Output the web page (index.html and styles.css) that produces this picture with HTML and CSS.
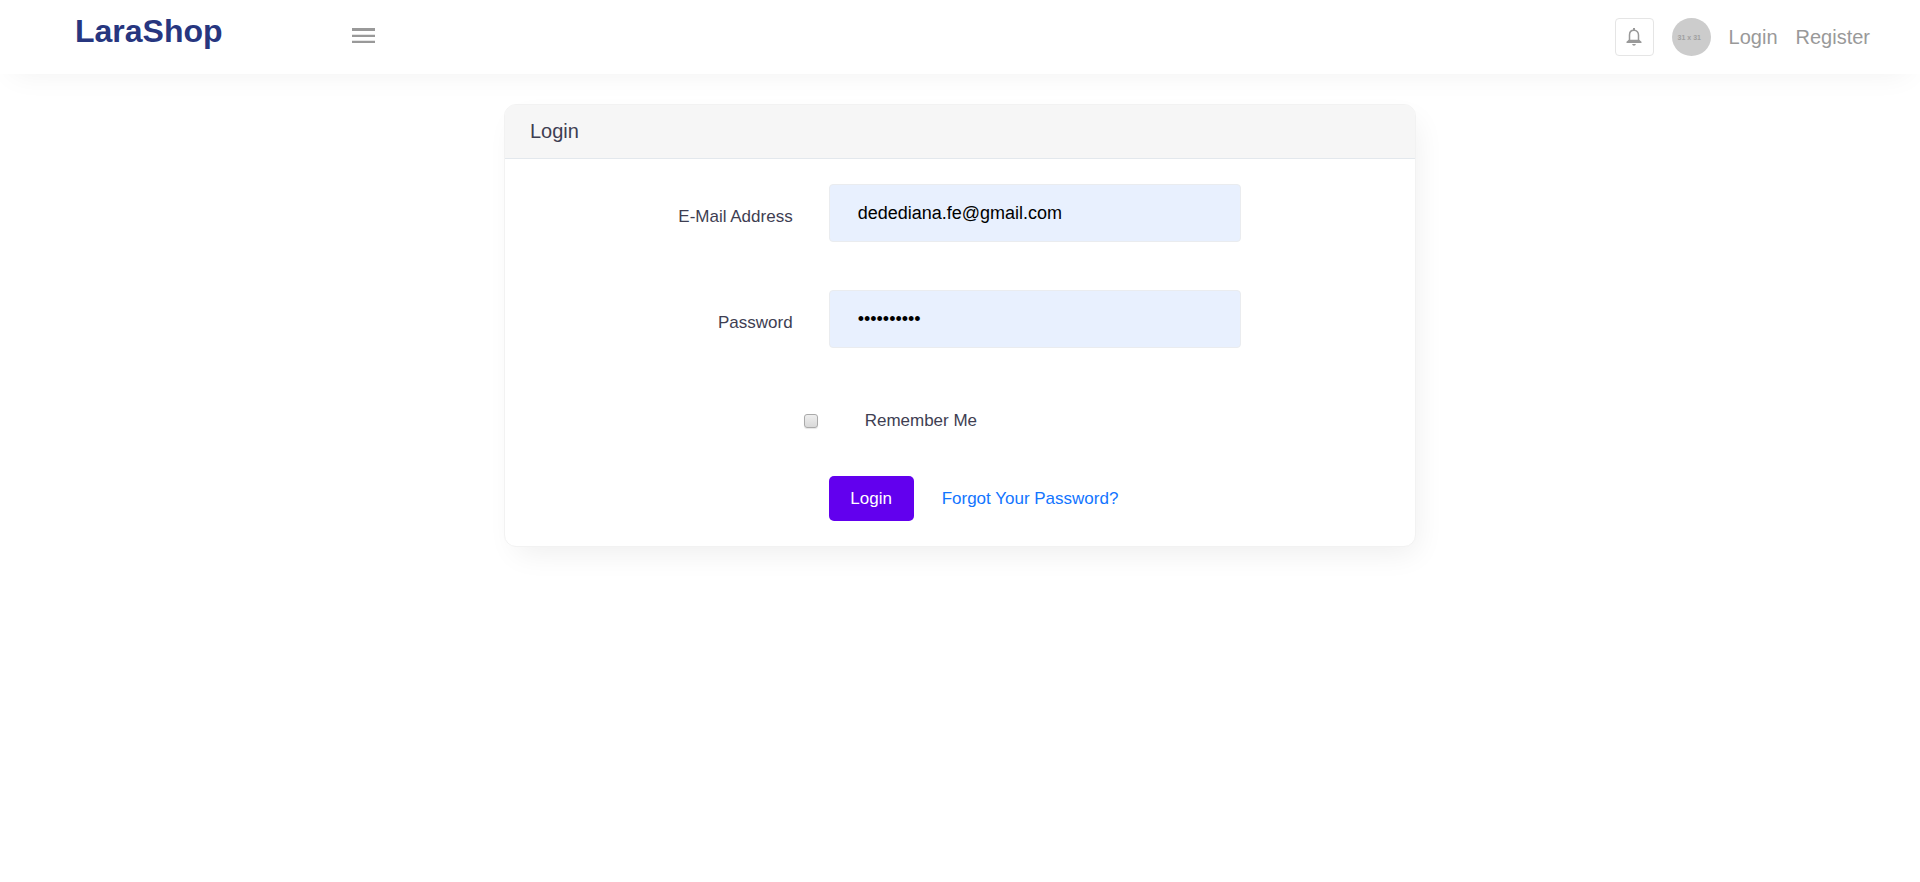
FILE: index.html
```html
<!DOCTYPE html>
<html lang="en">
<head>
<meta charset="utf-8">
<title>LaraShop</title>
<link rel="stylesheet" href="styles.css">
</head>
<body>
<header class="topbar">
  <a class="brand" href="#">LaraShop</a>
  <button class="menu-toggle" type="button" aria-label="Toggle menu">
    <svg width="23" height="16" viewBox="0 0 23 16" fill="#999"><path d="M0 0h23v3H0zM0 6.700h23v2.300H0zM0 12.700h23v2.300H0z"/></svg>
  </button>
  <nav class="nav">
    <button class="bell" type="button" aria-label="Notifications">
      <svg width="16" height="18" viewBox="0 0 16 18"><path fill="none" stroke="#999" stroke-width="1.500" d="M8 2.300C5 2.300 3.500 4.400 3.500 7V14.200H12.500V7C12.500 4.400 11 2.300 8 2.300Z"/><path fill="#999" d="M7 0h2v2.500H7zM2.800 11.800L.5 13.800V15h15v-1.200l-2.300-2zM6.200 16h3.600c0 2.300-3.600 2.300-3.600 0z"/></svg>
    </button>
    <span class="avatar">31 x 31</span>
    <a class="nav-link" href="#">Login</a>
    <a class="nav-link" href="#">Register</a>
  </nav>
</header>
<main class="page">
  <section class="card">
    <h1 class="card-header">Login</h1>
    <form class="card-body">
      <div class="row">
        <label class="label" for="email">E-Mail Address</label>
        <input class="field" id="email" type="email" value="dedediana.fe@gmail.com">
      </div>
      <div class="row">
        <label class="label" for="password">Password</label>
        <input class="field" id="password" type="password" value="secret1234">
      </div>
      <div class="row">
        <div class="remember">
          <input class="check" id="remember" type="checkbox">
          <label for="remember">Remember Me</label>
        </div>
      </div>
      <div class="row">
        <div class="actions">
          <button class="submit" type="submit">Login</button>
          <a class="forgot" href="#">Forgot Your Password?</a>
        </div>
      </div>
    </form>
  </section>
</main>
</body>
</html>
```
FILE: styles.css
```css
* { box-sizing: border-box; }
body {
  margin: 0;
  background: #fff;
  color: #3e3e52;
  font: 17px/24px "Liberation Sans", Arial, sans-serif;
}
a { text-decoration: none; }
button { font: inherit; cursor: pointer; }
.topbar {
  display: flex;
  align-items: flex-start;
  height: 74px;
  padding: 0 50px 0 75px;
  background: #fff;
  box-shadow: 0 12px 30px -12px rgba(0, 0, 0, 0.06);
}
.brand {
  width: 152px;
  padding-top: 11px;
  color: #27367f;
  font-size: 32px;
  line-height: 40px;
  font-weight: bold;
}
.menu-toggle {
  display: flex;
  margin: 28px 0 0 125px;
  padding: 0;
  border: 0;
  background: none;
}
.nav {
  display: flex;
  align-items: center;
  gap: 18px;
  height: 74px;
  margin-left: auto;
}
.bell {
  display: flex;
  align-items: center;
  justify-content: center;
  width: 39px;
  height: 38px;
  padding: 0;
  border: 1px solid #e5e5e5;
  border-radius: 4px;
  background: #fff;
}
.avatar {
  width: 39px;
  height: 38px;
  border-radius: 50%;
  background: #ccc;
  color: #a0a0a0;
  font-size: 7px;
  font-weight: bold;
  line-height: 40px;
  padding-left: 6px;
  white-space: nowrap;
}
.nav-link { color: #999; font-size: 20px; }
.page { padding: 30px 20px; }
.card {
  max-width: 912px;
  margin: 0 auto;
  border: 1px solid #f2f2f2;
  border-radius: 12px;
  background: #fff;
  box-shadow: 6px 12px 30px -6px rgba(0, 0, 0, 0.07);
}
.card-header {
  margin: 0;
  padding: 14px 25px 15px;
  border-bottom: 1px solid #e3e8ed;
  border-radius: 10px 10px 0 0;
  background: #f6f6f6;
  font-size: 20px;
  line-height: 24px;
  font-weight: normal;
}
.card-body { padding: 25px 7px; }
.row {
  display: grid;
  grid-template-columns: 4fr 6fr 2fr;
}
.label { padding: 21px 18px 0; text-align: right; }
.field {
  min-width: 0;
  height: 58px;
  margin: 0 18px 48px;
  padding: 0 28px;
  border: 1px solid #eaecef;
  border-radius: 4px;
  background: #e8f0fe;
  color: #000;
  font: inherit;
  font-size: 18px;
  outline: 0;
}
.remember {
  display: flex;
  grid-column: 2;
  align-items: center;
  gap: 47px;
  margin: 13px 0 43px -7px;
}
.check {
  appearance: none;
  width: 14px;
  height: 14px;
  margin: 0;
  border: 1px solid #aaa;
  border-radius: 3px;
  background: linear-gradient(#eee, #d9d9d9);
  box-shadow: 0 1px 1px rgba(0, 0, 0, 0.1);
}
.actions {
  display: flex;
  grid-column: 2;
  align-items: center;
  gap: 28px;
  padding-left: 18px;
}
.submit {
  width: 85px;
  height: 45px;
  padding: 0;
  border: 0;
  border-radius: 5px;
  background: #6200ee;
  color: #fff;
}
.forgot { color: #1275ff; }
```
